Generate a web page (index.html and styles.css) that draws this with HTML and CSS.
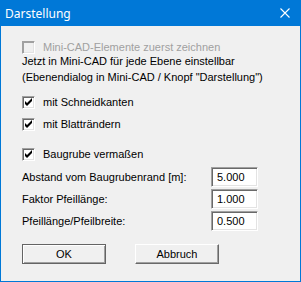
FILE: index.html
```html
<!DOCTYPE html>
<html>
<head>
	<title>Darstellung</title>
	<link rel="stylesheet" href="styles.css">
</head>
<body>
	<div class="window">
		<div class="titlebar">
			<span class="title">Darstellung</span>
			<svg class="close" width="10" height="10" viewBox="0 0 10 10">
				<path d="M0.5 0.5 L9.5 9.5 M9.5 0.5 L0.5 9.5" stroke="#fff" stroke-width="1.1" fill="none"/>
			</svg>
		</div>

		<div class="content">
			<label class="check first disabled">
				<span class="box"></span>
				<span>Mini-CAD-Elemente zuerst zeichnen</span>
			</label>

			<div class="note">
				Jetzt in Mini-CAD für jede Ebene einstellbar<br>
				(Ebenendialog in Mini-CAD / Knopf "Darstellung")
			</div>

			<label class="check row-cut">
				<span class="box">
					<svg width="11" height="11" viewBox="0 0 11 11"><path d="M2 4 L2 7 L4 9 L9 4 L9 1 L4 6 Z" fill="#000"/></svg>
				</span>
				<span>mit Schneidkanten</span>
			</label>

			<label class="check row-edge">
				<span class="box">
					<svg width="11" height="11" viewBox="0 0 11 11"><path d="M2 4 L2 7 L4 9 L9 4 L9 1 L4 6 Z" fill="#000"/></svg>
				</span>
				<span>mit Blatträndern</span>
			</label>

			<label class="check row-pit">
				<span class="box">
					<svg width="11" height="11" viewBox="0 0 11 11"><path d="M2 4 L2 7 L4 9 L9 4 L9 1 L4 6 Z" fill="#000"/></svg>
				</span>
				<span>Baugrube vermaßen</span>
			</label>

			<div class="fields">
				<label for="abstand">Abstand vom Baugrubenrand [m]:</label>
				<input type="text" id="abstand" value="5.000">

				<label for="faktor">Faktor Pfeillänge:</label>
				<input type="text" id="faktor" value="1.000">

				<label for="ratio">Pfeillänge/Pfeilbreite:</label>
				<input type="text" id="ratio" value="0.500">
			</div>

			<div class="buttons">
				<button class="default">OK</button>
				<button>Abbruch</button>
			</div>
		</div>
	</div>
</body>
</html>
```

FILE: styles.css
```css
body {
	margin: 0;
	background: #f0f0f0;
}

.window {
	width: 301px;
	height: 282px;
	box-sizing: border-box;
	background: #0078d7;
	padding: 0 1px 1px 1px;
	display: flex;
	flex-direction: column;
}

.titlebar {
	height: 26px;
	display: flex;
	align-items: center;
	padding-left: 4px;
	color: #fff;
	font-family: "Noto Sans", sans-serif;
	font-size: 12px;
}

.close {
	margin-left: auto;
	margin-right: 10px;
}

.content {
	flex: 1;
	background: #f0f0f0;
	padding: 15px 0 0 21px;
	font-family: "Liberation Sans", Arial, sans-serif;
	font-size: 11px;
	color: #000;
}

.check {
	display: flex;
	align-items: center;
	gap: 8px;
	height: 16px;
	line-height: 13px;
}

.box {
	width: 13px;
	height: 13px;
	box-sizing: border-box;
	background: #fff;
	border-top: 1px solid #a0a0a0;
	border-left: 1px solid #a0a0a0;
	border-bottom: 1px solid #fff;
	border-right: 1px solid #fff;
	box-shadow: inset 1px 1px #696969, inset -1px -1px #e3e3e3;
	display: flex;
	align-items: center;
	justify-content: center;
}

.disabled {
	color: #a0a0a0;
}

.disabled .box {
	background: #f0f0f0;
	box-shadow: inset 1px 1px #a0a0a0, inset -1px -1px #e3e3e3;
}

.first {
	height: 13px;
	margin-bottom: -1px;
}

.note {
	line-height: 16px;
}

.row-cut {
	margin-top: 9px;
}

.row-edge {
	margin-top: 6px;
}

.row-pit {
	margin-top: 14px;
}

.fields {
	display: grid;
	grid-template-columns: 189px 47px;
	row-gap: 2px;
	align-items: center;
	margin-top: 5px;
}

.fields input {
	width: 47px;
	height: 20px;
	box-sizing: border-box;
	margin: 0;
	padding: 0 0 0 5px;
	font-family: "Liberation Sans", Arial, sans-serif;
	font-size: 11px;
	background: #fff;
	border-top: 1px solid #a0a0a0;
	border-left: 1px solid #a0a0a0;
	border-bottom: 1px solid #fff;
	border-right: 1px solid #fff;
	box-shadow: inset 1px 1px #696969, inset -1px -1px #e3e3e3;
	outline: none;
}

.buttons {
	display: flex;
	gap: 29px;
	margin-top: 13px;
}

button {
	width: 84px;
	height: 20px;
	box-sizing: border-box;
	padding: 0;
	font-family: "Liberation Sans", Arial, sans-serif;
	font-size: 11px;
	color: #000;
	background: #f0f0f0;
	border-top: 1px solid #fff;
	border-left: 1px solid #fff;
	border-bottom: 1px solid #696969;
	border-right: 1px solid #696969;
	box-shadow: inset -1px -1px #a0a0a0;
}

button.default {
	border: 1px solid #646464;
	box-shadow: inset 1px 1px #fff, inset -1px -1px #a0a0a0;
}
```
